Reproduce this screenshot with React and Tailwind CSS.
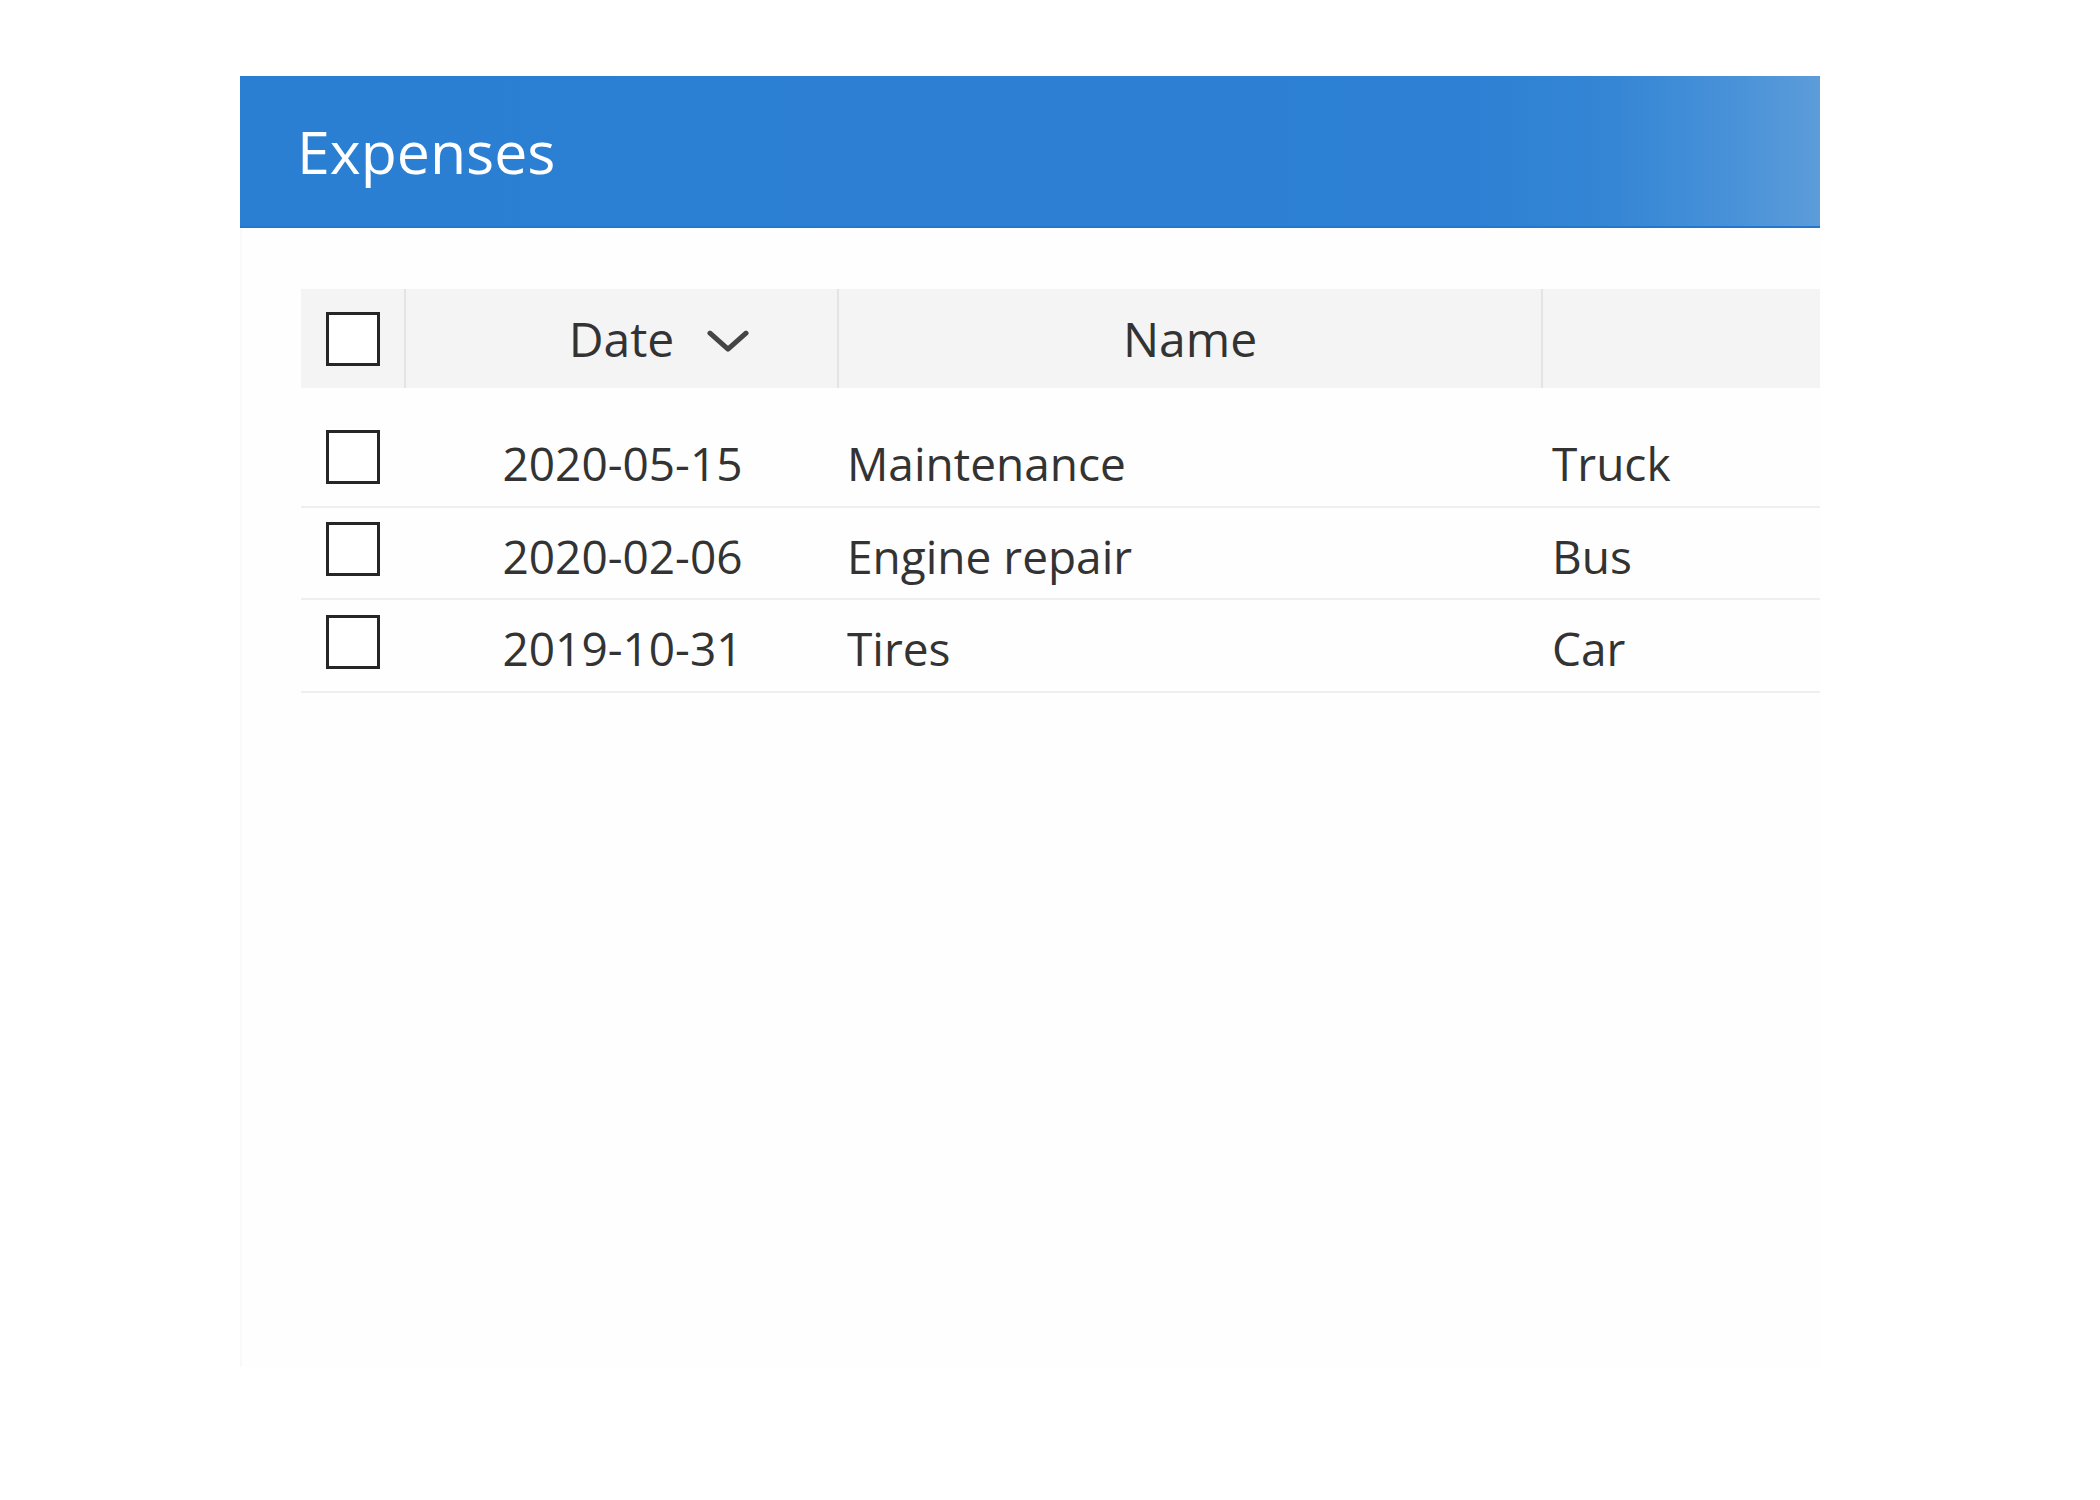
import React from "react";

const rows = [
  { date: "2020-05-15", name: "Maintenance", vehicle: "Truck" },
  { date: "2020-02-06", name: "Engine repair", vehicle: "Bus" },
  { date: "2019-10-31", name: "Tires", vehicle: "Car" },
];

function Box() {
  return <div className="w-[54px] h-[54px] border-[3px] border-[#262626] bg-white shrink-0" />;
}

export default function App() {
  return (
    <div
      className="w-[2100px] h-[1500px] bg-white pt-[76px] pl-[240px]"
      style={{ fontFamily: '"Open Sans", "Noto Sans", sans-serif' }}
    >
      <div className="w-[1580px] h-[1291px] flex flex-col overflow-hidden">
        <div className="h-[152px] shrink-0 flex items-center pl-[57px] bg-[linear-gradient(to_right,#2b7fd3_0%,#2d80d3_78%,#3586d5_87%,#4791d8_94%,#5c9cda_100%)] border-b-2 border-[#2377cd]">
          <span className="text-[59px] leading-none text-white">Expenses</span>
        </div>
        <div className="flex-1 bg-[#fefefe] border-l-2 border-[#f9f9f9] pt-[61px] pl-[59px]">
          <div className="grid grid-cols-[103px_433px_704px_400px] h-[99px] bg-[#f4f4f4] text-[#333] text-[48px]">
            <div className="flex items-center justify-center">
              <Box />
            </div>
            <div className="flex items-center justify-center border-l-2 border-[#e4e4e4]">
              <span className="relative leading-none">
                Date
                <svg
                  className="absolute left-[calc(100%+33px)] top-1/2 -translate-y-[40%]"
                  width="42"
                  height="22"
                  viewBox="0 0 42 22"
                  fill="none"
                >
                  <polyline points="3,3 21,19 39,3" stroke="#454545" strokeWidth="5" strokeLinecap="round" strokeLinejoin="round" />
                </svg>
              </span>
            </div>
            <div className="flex items-center justify-center border-l-2 border-[#e4e4e4]">
              <span className="leading-none">Name</span>
            </div>
            <div className="border-l-2 border-[#e4e4e4]" />
          </div>
          <div className="pt-[27px]">
            {rows.map((r) => (
              <div
                key={r.date}
                className="grid grid-cols-[103px_433px_704px_400px] h-[92.5px] border-b-2 border-[#efefef] text-[46px] text-[#333]"
              >
                <div className="flex items-center justify-center pb-[7px]">
                  <Box />
                </div>
                <div className="flex items-center justify-center pl-[4px] pt-[6px]">
                  <span className="leading-none">{r.date}</span>
                </div>
                <div className="flex items-center pl-[10px] pt-[6px]">
                  <span className="leading-none">{r.name}</span>
                </div>
                <div className="flex items-center pl-[11px] pt-[6px]">
                  <span className="leading-none">{r.vehicle}</span>
                </div>
              </div>
            ))}
          </div>
        </div>
      </div>
    </div>
  );
}
